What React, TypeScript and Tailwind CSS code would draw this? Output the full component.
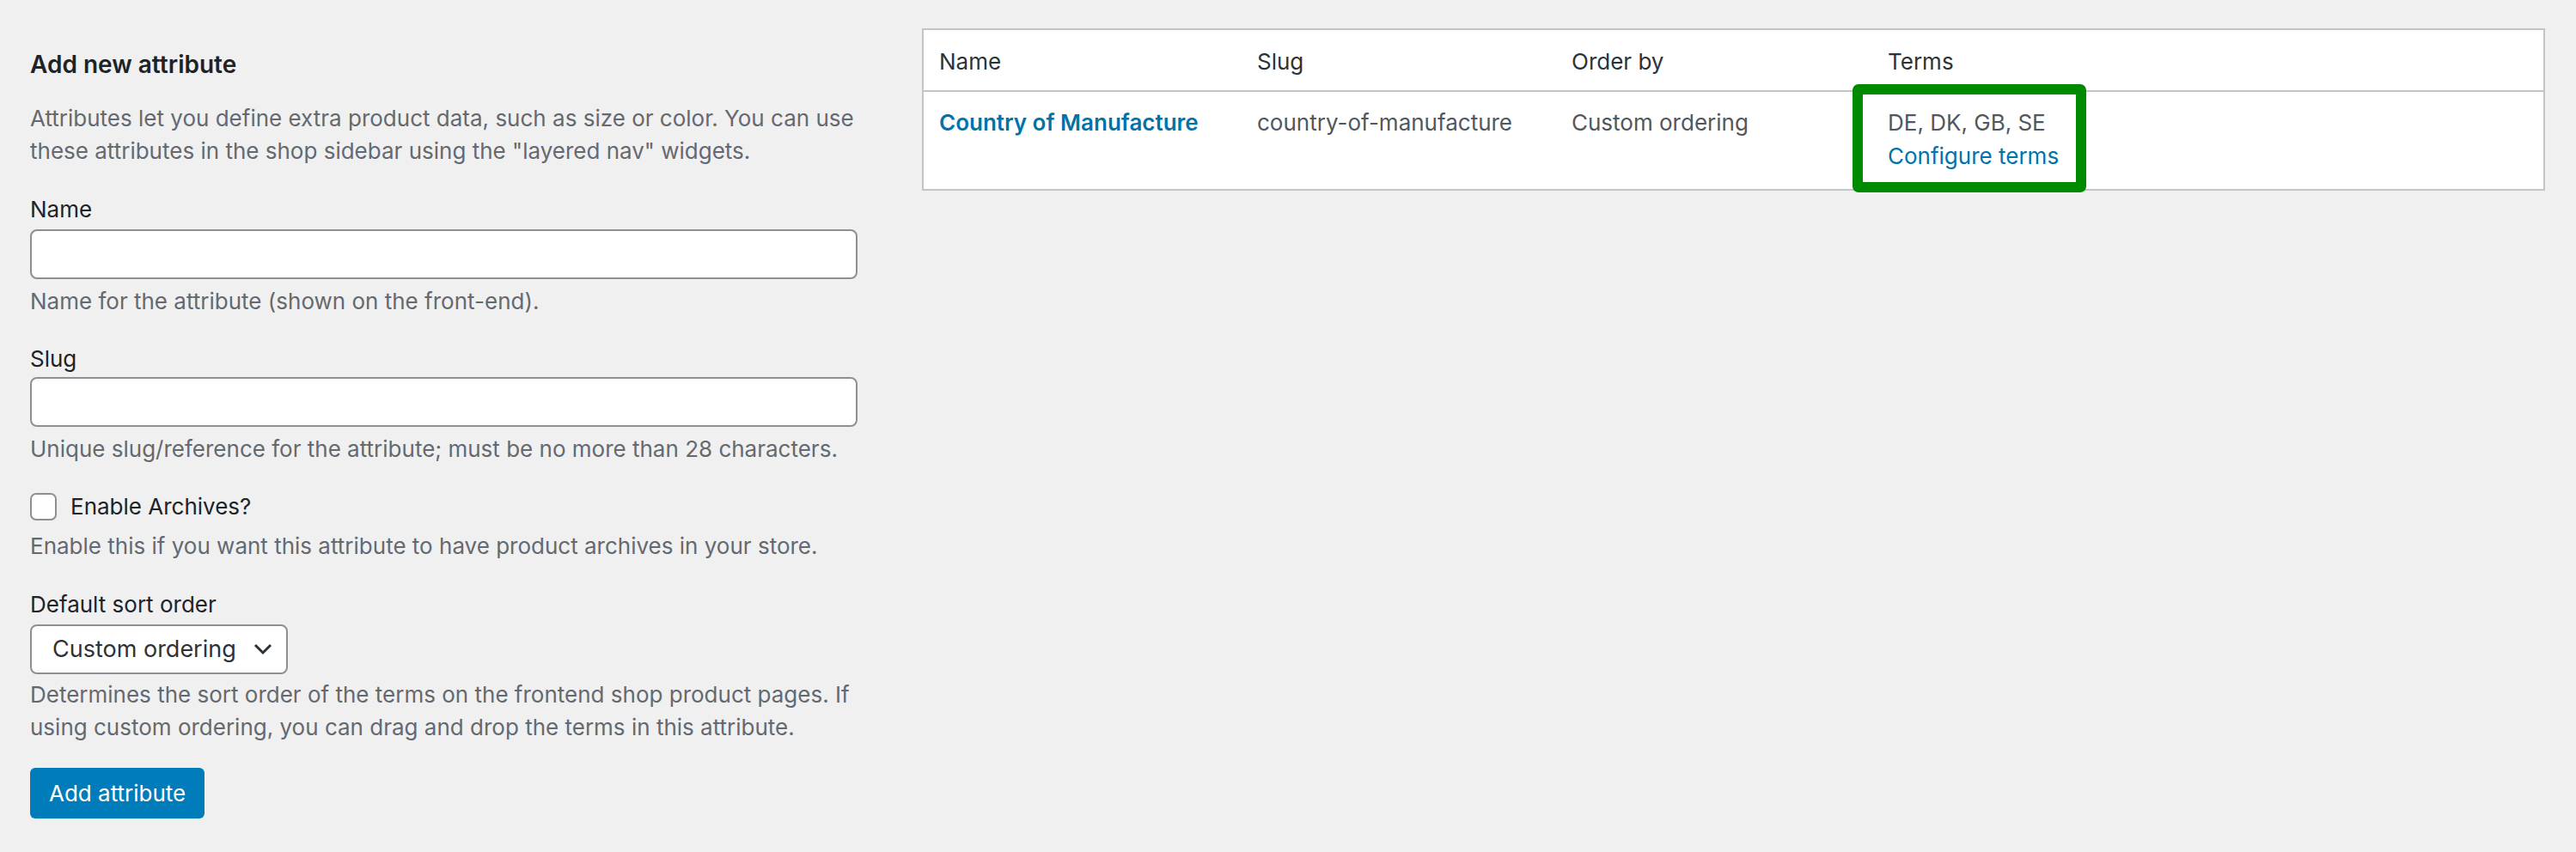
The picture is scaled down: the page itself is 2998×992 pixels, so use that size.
import React from "react";

const Label = ({ children, className = "" }: { children: React.ReactNode; className?: string }) => {
  return <div className={`text-[26px] leading-[38px] text-[#1d2327] ${className}`}>{children}</div>;
};

const Hint = ({ children, className = "" }: { children: React.ReactNode; className?: string }) => {
  return <p className={`text-[26px] leading-[38px] text-[#646970] ${className}`}>{children}</p>;
};

const TextInput = ({ className = "" }: { className?: string }) => {
  return (
    <input
      type="text"
      className={`block w-full h-[58px] bg-white border-2 border-[#8c8f94] rounded-[8px] px-4 text-[26px] outline-none ${className}`}
    />
  );
};

export default function App() {
  return (
    <div
      className="min-h-screen w-full bg-[#f0f0f1] flex items-start pl-[35px] pr-[36px]"
      style={{ fontFamily: 'Inter, "Liberation Sans", Arial, sans-serif' }}
    >
      {/* add form */}
      <div className="w-[963px] shrink-0 pt-[56px]">
        <h2 className="text-[28px] leading-[38px] font-semibold text-[#1d2327]">Add new attribute</h2>
        <Hint className="mt-[25px]">
          Attributes let you define extra product data, such as size or color. You can use these attributes in the shop
          sidebar using the "layered nav" widgets.
        </Hint>

        <Label className="mt-[30px]">Name</Label>
        <TextInput className="mt-[4px]" />
        <Hint className="mt-[7px]">Name for the attribute (shown on the front-end).</Hint>

        <Label className="mt-[29px]">Slug</Label>
        <TextInput className="mt-[2px]" />
        <Hint className="mt-[7px]">Unique slug/reference for the attribute; must be no more than 28 characters.</Hint>

        <label className="mt-[29px] flex items-center gap-4 text-[26px] leading-[38px] text-[#1d2327]">
          <span className="block w-[31px] h-[32px] bg-white border-2 border-[#8c8f94] rounded-[7px]" />
          Enable Archives?
        </label>
        <Hint className="mt-[8px]">Enable this if you want this attribute to have product archives in your store.</Hint>

        <Label className="mt-[30px]">Default sort order</Label>
        <div className="mt-[4px] w-[300px] h-[58px] bg-white border-2 border-[#8c8f94] rounded-[8px] flex items-center justify-between pl-[24px] pr-[16px]">
          <span className="text-[27px] text-[#2c3338]">Custom ordering</span>
          <svg width="22" height="14" viewBox="0 0 22 14" fill="none">
            <path d="M2 2l9 9 9-9" stroke="#2c3338" strokeWidth="3" />
          </svg>
        </div>
        <Hint className="mt-[5px]">
          Determines the sort order of the terms on the frontend shop product pages. If using custom ordering, you can
          drag and drop the terms in this attribute.
        </Hint>

        <button className="mt-[28px] h-[59px] px-[22px] rounded-[6px] bg-[#007cba] text-white text-[26px]">
          Add attribute
        </button>
      </div>

      {/* attributes table */}
      <div className="relative ml-[75px] mt-[33px] flex-1 bg-white border-2 border-[#c3c4c7]">
        <div className="grid grid-cols-[370px_366px_368px_1fr] border-b-2 border-[#c3c4c7] text-[26px] leading-[38px] text-[#2c3338]">
          <div className="pl-[18px] pt-[18px] pb-[14px]">Name</div>
          <div className="pl-[18px] pt-[18px] pb-[14px]">Slug</div>
          <div className="pl-[18px] pt-[18px] pb-[14px]">Order by</div>
          <div className="pl-[18px] pt-[18px] pb-[14px]">Terms</div>
        </div>
        <div className="grid grid-cols-[370px_366px_368px_1fr] h-[113px] text-[26px] leading-[38px] text-[#50575e]">
          <div className="pl-[18px] pt-[17px]">
            <a className="font-semibold text-[#0073aa]">Country of Manufacture</a>
          </div>
          <div className="pl-[18px] pt-[17px]">country-of-manufacture</div>
          <div className="pl-[18px] pt-[17px]">Custom ordering</div>
          <div className="pl-[18px] pt-[17px]">
            <div>DE, DK, GB, SE</div>
            <a className="block text-[#0073aa] leading-[39px]">Configure terms</a>
          </div>
        </div>
        <div className="absolute left-[1081px] top-[63px] w-[272px] h-[126px] border-[12px] border-[#008a00] rounded-[7px]" />
      </div>
    </div>
  );
}
